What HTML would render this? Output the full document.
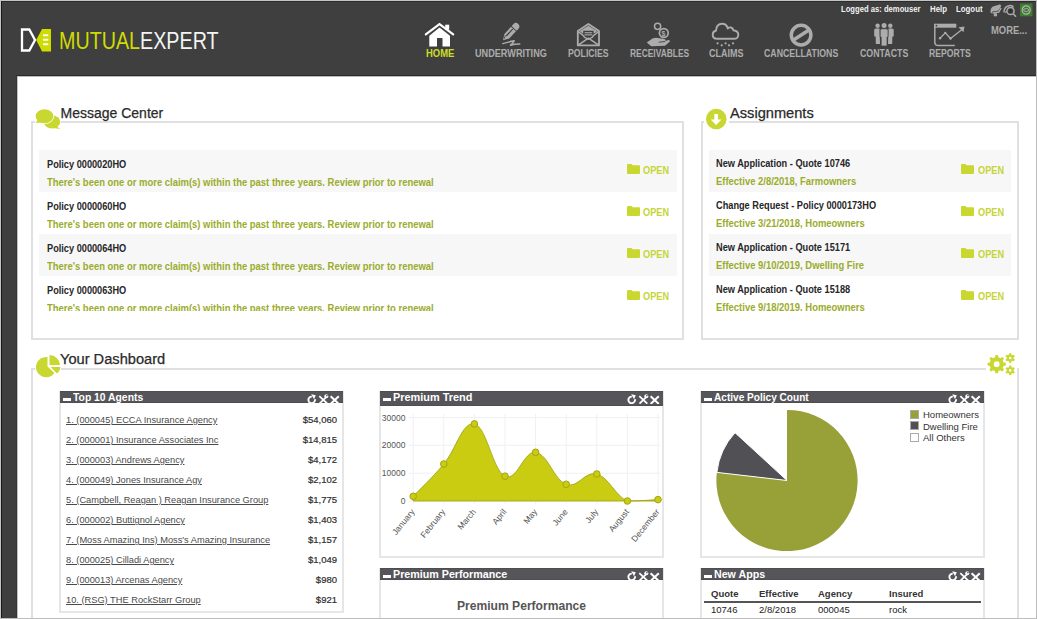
<!DOCTYPE html><html><head><meta charset="utf-8"><style>
*{box-sizing:border-box;margin:0;padding:0}
html,body{width:1037px;height:619px;overflow:hidden;background:#c4c4c4;font-family:"Liberation Sans",sans-serif}
.a{position:absolute;white-space:nowrap;line-height:1}
#dark{position:absolute;left:1px;top:1px;width:1035px;height:617px;background:#3f3f3f;border-left:1px solid #1a1a1a;border-top:1px solid #2c2c2c}
#content{position:absolute;left:17px;top:76px;width:1019px;height:542px;background:#fff}
#navline{position:absolute;left:16px;top:75px;width:1020px;height:1px;background:#2a2a2a}
.nav{font-size:10px;font-weight:bold;color:#acacac;transform-origin:0 0}
.top{font-size:9px;font-weight:bold;color:#f2f2f2;transform-origin:0 0}
.panel{position:absolute;border:2px solid #e0e0e2}
.ptitle{font-size:14px;color:#2a2a2a;transform-origin:0 0;-webkit-text-stroke:0.25px #2a2a2a}
.row{position:absolute;background:#f7f7f7}
.rt{font-size:10px;font-weight:bold;color:#262626;transform-origin:0 0;transform:scaleX(0.92)}
.rg{font-size:10px;font-weight:bold;color:#9bac2c;transform-origin:0 0;transform:scaleX(0.945)}
.open{font-size:10px;font-weight:bold;color:#c6d536;transform-origin:0 0;transform:scaleX(0.92)}
.folder{position:absolute;width:13px;height:10px}
.wh{position:absolute;background:#56555a;box-shadow:inset 0 1px 0 #4e4d52,inset 0 -1px 0 #4e4d52}
.whT{font-size:10px;font-weight:bold;color:#fff;transform-origin:0 0}
.wb{position:absolute;border:2px solid #e6e6e6;border-top:0}
.ag{font-size:9.5px;color:#4a4a4a;text-decoration:underline;transform-origin:0 0;transform:scaleX(0.975)}
.am{font-size:9.5px;color:#2e2e2e;transform-origin:100% 0;-webkit-text-stroke:0.2px #2e2e2e}
.clip{position:absolute;overflow:hidden}
</style></head><body>
<div id="dark"></div><div id="navline"></div><div id="content"></div><div class="a" style="left:16px;top:76px;width:1px;height:542px;background:#363636"></div><div class="a" style="left:17px;top:76px;width:1px;height:542px;background:#c4c4c4"></div><div class="a" style="left:17px;top:76px;width:1019px;height:1px;background:#bcbcbc"></div>
<svg class="a" style="left:20px;top:28px" width="32" height="24" viewBox="0 0 32 24">
 <path d="M2 1.5 H9.3 L15 12 L9.3 22.5 H2 Z" fill="none" stroke="#fff" stroke-width="2.3"/>
 <path d="M16.2 12 L22 1 H31 V23.5 H22 Z" fill="#cfdc00"/>
 <rect x="23" y="6.3" width="5.3" height="1.9" fill="#fff"/>
 <rect x="23" y="10.8" width="5.3" height="1.9" fill="#fff"/>
 <rect x="23" y="15.3" width="5.3" height="1.9" fill="#fff"/>
</svg>
<div class="a" style="left:59px;top:30px;font-size:23.5px;color:#cfdc00;transform:scaleX(0.839);transform-origin:0 0">MUTUAL<span style="color:#f4f4f4">EXPERT</span></div>
<div class="a top" style="left:841px;top:5px;transform:scaleX(0.85)">Logged as: demouser</div>
<div class="a top" style="left:930px;top:5px;transform:scaleX(0.87)">Help</div>
<div class="a top" style="left:956px;top:5px;transform:scaleX(0.87)">Logout</div>
<svg class="a" style="left:989px;top:3px" width="46" height="14" viewBox="0 0 46 14">
 <path d="M1.5 9.5 Q1.2 5 4 3.5 L10.5 1.5 Q12.5 1.5 12 3.5 L9.5 7.5 L3.5 8.5 Q2.8 9 3 10.5 Z" fill="#a9a9a9"/>
 <path d="M3.5 10 L9.8 9 L12.2 5" stroke="#a9a9a9" stroke-width="1.4" fill="none"/>
 <rect x="4.8" y="10.3" width="3.2" height="3" fill="#a9a9a9"/>
 <path d="M15 9.5 Q15 5 18 3.5 L21 2.5 Q23.5 2.2 24.5 4.5" stroke="#a9a9a9" stroke-width="1.5" fill="none"/>
 <circle cx="21.5" cy="8" r="3.6" fill="#3f3f3f" stroke="#a9a9a9" stroke-width="1.5"/>
 <ellipse cx="21.5" cy="8" rx="1.2" ry="2" fill="#2a2a2a"/>
 <path d="M24.2 10.8 L27 13.8" stroke="#a9a9a9" stroke-width="1.6"/>
 <path d="M16 9.5 L17.5 8.5" stroke="#a9a9a9" stroke-width="1.2"/>
 <rect x="31" y="0.5" width="12.5" height="12.8" fill="#3e7c2f"/>
 <ellipse cx="37.2" cy="7" rx="4" ry="4.2" fill="none" stroke="#b3b3b3" stroke-width="1.2"/>
 <ellipse cx="37.2" cy="7" rx="2.6" ry="1.5" fill="none" stroke="#aaa" stroke-width="0.9"/>
</svg>
<svg class="a" style="left:420px;top:18px" width="40" height="32" viewBox="420 18 40 32">
 <path d="M425.8 34.3 L439.5 24.2 L453.2 34.3" fill="none" stroke="#fff" stroke-width="2.2" stroke-linecap="round"/>
 <rect x="445.2" y="24.7" width="4" height="5" fill="#fff"/>
 <path d="M429.3 35.8 L439.5 27.6 L450 35.8 V46.4 H442.5 V38 H437 V46.4 H429.3 Z" fill="#fff"/>
</svg>
<svg class="a" style="left:495px;top:18px" width="32" height="32" viewBox="495 18 32 32">
 <g transform="translate(503,40.3) rotate(-47) scale(0.93)">
  <path d="M0 0 L6 -3.6 H16.5 V3.6 H6 Z" fill="#acacac"/>
  <path d="M17.5 -3.6 H20.5 Q24 -3.6 24 0 Q24 3.6 20.5 3.6 H17.5 Z" fill="#acacac"/>
  <path d="M6.5 -0.6 H15.5" stroke="#3f3f3f" stroke-width="1.3" stroke-linecap="round"/>
  <path d="M1.8 -0.2 L5.8 -1.8" stroke="#3f3f3f" stroke-width="0.8"/>
 </g>
 <path d="M502.8 43.6 Q509 41.8 514.2 40.8 Q512.8 43.3 510.5 45.2 Q514.5 44 519.8 44" fill="none" stroke="#acacac" stroke-width="1.5" stroke-linecap="round" stroke-linejoin="round"/>
</svg>
<svg class="a" style="left:570px;top:18px" width="36" height="32" viewBox="570 18 36 32">
 <path d="M577.8 31 L588.4 24 L599 31 V45.4 H577.8 Z" fill="none" stroke="#acacac" stroke-width="1.8" stroke-linejoin="round"/>
 <path d="M579.5 31.3 L588.4 25.8 L597.3 31.3 L593.6 33.8 V30.8 H583.2 V33.8 Z" fill="#acacac"/>
 <rect x="584.6" y="32.2" width="7.6" height="1.1" fill="#acacac"/><rect x="584.6" y="34.3" width="7.6" height="1.1" fill="#acacac"/>
 <path d="M578.5 44.8 L588.4 38.2 L598.3 44.8" fill="none" stroke="#acacac" stroke-width="1.6"/>
 <path d="M578.5 31.8 L584.5 36.5 M598.3 31.8 L592.3 36.5" fill="none" stroke="#acacac" stroke-width="1.5"/>
 <path d="M583.5 36 L588.4 38.6 L593.3 36 V37.5 L588.4 40 L583.5 37.5 Z" fill="#acacac"/>
</svg>
<svg class="a" style="left:640px;top:18px" width="36" height="32" viewBox="640 18 36 32">
 <circle cx="657.6" cy="26.3" r="3.1" fill="none" stroke="#acacac" stroke-width="1.5"/>
 <circle cx="663.8" cy="33" r="4.4" fill="none" stroke="#acacac" stroke-width="1.7"/>
 <text x="661.6" y="35.8" font-family="Liberation Sans" font-size="7" font-weight="bold" fill="#acacac">$</text>
 <path d="M646.8 42.6 L652.5 38.6 Q655 37.4 657.8 37.9 L664.2 39 Q666.3 39.6 665.6 41.2 L667.5 40.3 Q670.2 39.5 669.9 41.6 L665 45.8 L651.2 46.3 Z" fill="#acacac"/>
 <path d="M658.8 42.2 L665.2 41.5" stroke="#3f3f3f" stroke-width="0.9"/>
</svg>
<svg class="a" style="left:708px;top:18px" width="36" height="32" viewBox="708 18 36 32">
 <path d="M717 38.8 Q712.7 38.8 712.7 34.8 Q712.7 31.2 716 30.7 Q716.5 23.8 722 23.8 Q726.5 23.8 727.8 28.5 Q729 27 731 27.5 Q733 28 733.4 30.3 Q738.5 31 738.3 35 Q738 38.8 734 38.8 Z" fill="none" stroke="#acacac" stroke-width="1.9" stroke-linejoin="round"/>
 <circle cx="717.6" cy="43.3" r="1.15" fill="#acacac"/><circle cx="721.7" cy="45.3" r="1.15" fill="#acacac"/>
 <circle cx="725.6" cy="43.3" r="1.15" fill="#acacac"/><circle cx="729" cy="45.3" r="1.15" fill="#acacac"/>
 <circle cx="733" cy="43.3" r="1.15" fill="#acacac"/>
</svg>
<svg class="a" style="left:783px;top:18px" width="36" height="32" viewBox="783 18 36 32">
 <circle cx="801.1" cy="35.1" r="9.8" fill="none" stroke="#acacac" stroke-width="3.5"/>
 <path d="M793.5 40 L808.5 30.2" stroke="#acacac" stroke-width="3.5"/>
</svg>
<svg class="a" style="left:866px;top:18px" width="36" height="32" viewBox="866 18 36 32">
 <circle cx="877.6" cy="25.8" r="2.2" fill="#acacac"/><circle cx="890.3" cy="25.8" r="2.2" fill="#acacac"/>
 <path d="M874.2 30 Q874 28.5 876 28.5 H879.5 L880 44 H875.8 L875.7 36.5 H874.2 Z" fill="#acacac"/>
 <path d="M893.7 30 Q894 28.5 892 28.5 H888.5 L888 44 H892.2 L892.3 36.5 H893.7 Z" fill="#acacac"/>
 <circle cx="884.1" cy="25.6" r="2.5" fill="#acacac"/>
 <path d="M880.2 30.3 Q880.2 28.8 882 28.8 H886.2 Q888 28.8 888 30.3 V37 H887 V46 H881.2 V37 H880.2 Z" fill="#acacac" stroke="#3f3f3f" stroke-width="0.7"/>
</svg>
<svg class="a" style="left:929px;top:18px" width="40" height="32" viewBox="929 18 40 32">
 <rect x="934" y="23.7" width="22.3" height="4" fill="#acacac"/>
 <circle cx="936.5" cy="25.7" r="0.9" fill="#3f3f3f"/>
 <path d="M934.8 27 V42 Q934.8 45.6 938.4 45.6 H954.8" fill="none" stroke="#acacac" stroke-width="1.5"/>
 <path d="M940 38.3 L945.3 32.9 L950.5 38.5 L962 29.5" fill="none" stroke="#acacac" stroke-width="1.3"/>
 <circle cx="940" cy="38.3" r="1.2" fill="#acacac"/><circle cx="945.3" cy="32.9" r="1.2" fill="#acacac"/><circle cx="950.5" cy="38.5" r="1.2" fill="#acacac"/>
 <path d="M958.5 27.3 L964.5 26.5 L963.5 32.2 Z" fill="#acacac"/>
</svg>
<div class="a nav" style="left:426px;top:49px;transform:scaleX(0.948);color:#cddc2a">HOME</div>
<div class="a nav" style="left:475px;top:49px;transform:scaleX(0.913)">UNDERWRITING</div>
<div class="a nav" style="left:568px;top:49px;transform:scaleX(0.870)">POLICIES</div>
<div class="a nav" style="left:630px;top:49px;transform:scaleX(0.841)">RECEIVABLES</div>
<div class="a nav" style="left:709px;top:49px;transform:scaleX(0.897)">CLAIMS</div>
<div class="a nav" style="left:764px;top:49px;transform:scaleX(0.876)">CANCELLATIONS</div>
<div class="a nav" style="left:860px;top:49px;transform:scaleX(0.881)">CONTACTS</div>
<div class="a nav" style="left:929px;top:49px;transform:scaleX(0.864)">REPORTS</div>
<div class="a nav" style="left:991px;top:26px;transform:scaleX(0.94)">MORE...</div>
<div class="panel" style="left:31px;top:121px;width:653px;height:219px"></div>
<svg class="a" style="left:35px;top:104px;background:#fff" width="26" height="27" viewBox="35 104 26 27">
 <ellipse cx="52" cy="121.8" rx="8.3" ry="6.6" fill="#c8d830"/>
 <path d="M56 126 L60.3 128.9 L53 128 Z" fill="#c8d830"/>
 <ellipse cx="44.5" cy="116.2" rx="9.6" ry="7.8" fill="#fff"/>
 <ellipse cx="44.5" cy="116.2" rx="8.8" ry="7" fill="#c8d830"/>
 <path d="M38 119.5 L35.7 123 L42 122.4 Z" fill="#c8d830"/>
</svg>
<div class="a ptitle" style="left:60.5px;top:106px">Message Center</div>
<div class="clip" style="left:39px;top:150px;width:638px;height:161px">
<div class="row" style="left:0;top:0px;width:638px;height:42px"></div>
<div class="a rt" style="left:8px;top:10px">Policy 0000020HO</div>
<div class="a rg" style="left:8px;top:28px">There's been one or more claim(s) within the past three years. Review prior to renewal</div>
<svg class="folder" style="left:587.5px;top:13.7px" viewBox="0 0 13 10"><path d="M0 1 Q0 0 1 0 H4.5 L5.5 1.3 H12 Q13 1.3 13 2.3 V9 Q13 10 12 10 H1 Q0 10 0 9 Z" fill="#c8d830"/></svg>
<div class="a open" style="left:604px;top:15.5px">OPEN</div>
<div class="a rt" style="left:8px;top:52px">Policy 0000060HO</div>
<div class="a rg" style="left:8px;top:70px">There's been one or more claim(s) within the past three years. Review prior to renewal</div>
<svg class="folder" style="left:587.5px;top:55.7px" viewBox="0 0 13 10"><path d="M0 1 Q0 0 1 0 H4.5 L5.5 1.3 H12 Q13 1.3 13 2.3 V9 Q13 10 12 10 H1 Q0 10 0 9 Z" fill="#c8d830"/></svg>
<div class="a open" style="left:604px;top:57.5px">OPEN</div>
<div class="row" style="left:0;top:84px;width:638px;height:42px"></div>
<div class="a rt" style="left:8px;top:94px">Policy 0000064HO</div>
<div class="a rg" style="left:8px;top:112px">There's been one or more claim(s) within the past three years. Review prior to renewal</div>
<svg class="folder" style="left:587.5px;top:97.7px" viewBox="0 0 13 10"><path d="M0 1 Q0 0 1 0 H4.5 L5.5 1.3 H12 Q13 1.3 13 2.3 V9 Q13 10 12 10 H1 Q0 10 0 9 Z" fill="#c8d830"/></svg>
<div class="a open" style="left:604px;top:99.5px">OPEN</div>
<div class="a rt" style="left:8px;top:136px">Policy 0000063HO</div>
<div class="a rg" style="left:8px;top:154px">There's been one or more claim(s) within the past three years. Review prior to renewal</div>
<svg class="folder" style="left:587.5px;top:139.7px" viewBox="0 0 13 10"><path d="M0 1 Q0 0 1 0 H4.5 L5.5 1.3 H12 Q13 1.3 13 2.3 V9 Q13 10 12 10 H1 Q0 10 0 9 Z" fill="#c8d830"/></svg>
<div class="a open" style="left:604px;top:141.5px">OPEN</div>
</div>
<div class="panel" style="left:701px;top:121px;width:318px;height:219px"></div>
<svg class="a" style="left:704px;top:106px;background:#fff" width="25" height="25" viewBox="0 0 25 25">
 <circle cx="12.3" cy="13" r="10.3" fill="#c8d830"/>
 <path d="M10.3 8 H13.9 V13.5 H17.5 L12.1 18.9 L6.7 13.5 H10.3 Z" fill="#fff"/>
</svg>
<div class="a ptitle" style="left:730px;top:105.5px;transform:scaleX(1.045)">Assignments</div>
<div class="clip" style="left:709px;top:150px;width:302px;height:161px">
<div class="row" style="left:0;top:0px;width:302px;height:42px"></div>
<div class="a rt" style="left:7px;top:9px">New Application - Quote 10746</div>
<div class="a rg" style="left:7px;top:27px">Effective 2/8/2018, Farmowners</div>
<svg class="folder" style="left:252px;top:13.7px" viewBox="0 0 13 10"><path d="M0 1 Q0 0 1 0 H4.5 L5.5 1.3 H12 Q13 1.3 13 2.3 V9 Q13 10 12 10 H1 Q0 10 0 9 Z" fill="#c8d830"/></svg>
<div class="a open" style="left:269px;top:15.5px">OPEN</div>
<div class="a rt" style="left:7px;top:51px">Change Request - Policy 0000173HO</div>
<div class="a rg" style="left:7px;top:69px">Effective 3/21/2018, Homeowners</div>
<svg class="folder" style="left:252px;top:55.7px" viewBox="0 0 13 10"><path d="M0 1 Q0 0 1 0 H4.5 L5.5 1.3 H12 Q13 1.3 13 2.3 V9 Q13 10 12 10 H1 Q0 10 0 9 Z" fill="#c8d830"/></svg>
<div class="a open" style="left:269px;top:57.5px">OPEN</div>
<div class="row" style="left:0;top:84px;width:302px;height:42px"></div>
<div class="a rt" style="left:7px;top:93px">New Application - Quote 15171</div>
<div class="a rg" style="left:7px;top:111px">Effective 9/10/2019, Dwelling Fire</div>
<svg class="folder" style="left:252px;top:97.7px" viewBox="0 0 13 10"><path d="M0 1 Q0 0 1 0 H4.5 L5.5 1.3 H12 Q13 1.3 13 2.3 V9 Q13 10 12 10 H1 Q0 10 0 9 Z" fill="#c8d830"/></svg>
<div class="a open" style="left:269px;top:99.5px">OPEN</div>
<div class="a rt" style="left:7px;top:135px">New Application - Quote 15188</div>
<div class="a rg" style="left:7px;top:153px">Effective 9/18/2019, Homeowners</div>
<svg class="folder" style="left:252px;top:139.7px" viewBox="0 0 13 10"><path d="M0 1 Q0 0 1 0 H4.5 L5.5 1.3 H12 Q13 1.3 13 2.3 V9 Q13 10 12 10 H1 Q0 10 0 9 Z" fill="#c8d830"/></svg>
<div class="a open" style="left:269px;top:141.5px">OPEN</div>
</div>
<div class="panel" style="left:31px;top:368px;width:988px;height:290px"></div>
<svg class="a" style="left:35px;top:352px;background:#fff" width="26" height="27" viewBox="0 0 26 27">
 <path d="M12.5 5 V14.5 L19.5 21 A10.2 10.2 0 1 1 12.5 5 Z" fill="#c8d830"/>
 <path d="M14.5 3 A10.5 10.5 0 0 1 25 13 H14.5 Z" fill="#c8d830"/>
 <path d="M15.5 15 H25.5 A10.5 10.5 0 0 1 22 21.6 Z" fill="#c8d830"/>
</svg>
<div class="a ptitle" style="left:59.5px;top:351.5px;transform:scaleX(1.045)">Your Dashboard</div>
<div class="a" style="left:986px;top:352px;width:31px;height:26px;background:#fff"></div><svg class="a" style="left:984px;top:350px" width="34" height="28" viewBox="984 350 34 28"><path d="M995.36,355.20 L996.25,355.11 L997.15,355.11 L998.04,355.20 L998.40,357.41 L999.06,357.61 L999.69,357.87 L1000.30,358.20 L1002.12,356.89 L1002.81,357.46 L1003.44,358.09 L1004.01,358.78 L1002.70,360.60 L1003.03,361.21 L1003.29,361.84 L1003.49,362.50 L1005.70,362.86 L1005.79,363.75 L1005.79,364.65 L1005.70,365.54 L1003.49,365.90 L1003.29,366.56 L1003.03,367.19 L1002.70,367.80 L1004.01,369.62 L1003.44,370.31 L1002.81,370.94 L1002.12,371.51 L1000.30,370.20 L999.69,370.53 L999.06,370.79 L998.40,370.99 L998.04,373.20 L997.15,373.29 L996.25,373.29 L995.36,373.20 L995.00,370.99 L994.34,370.79 L993.71,370.53 L993.10,370.20 L991.28,371.51 L990.59,370.94 L989.96,370.31 L989.39,369.62 L990.70,367.80 L990.37,367.19 L990.11,366.56 L989.91,365.90 L987.70,365.54 L987.61,364.65 L987.61,363.75 L987.70,362.86 L989.91,362.50 L990.11,361.84 L990.37,361.21 L990.70,360.60 L989.39,358.78 L989.96,358.09 L990.59,357.46 L991.28,356.89 L993.10,358.20 L993.71,357.87 L994.34,357.61 L995.00,357.41 Z M999.6,364.2 A2.9,2.9 0 1 0 993.8000000000001,364.2 A2.9,2.9 0 1 0 999.6,364.2 Z" fill="#c8d830" fill-rule="evenodd"/><path d="M1009.24,353.19 L1009.88,353.11 L1010.52,353.11 L1011.16,353.19 L1011.33,354.69 L1011.75,354.86 L1012.14,355.09 L1012.51,355.37 L1013.88,354.77 L1014.27,355.28 L1014.59,355.83 L1014.84,356.42 L1013.63,357.32 L1013.69,357.77 L1013.69,358.23 L1013.63,358.68 L1014.84,359.58 L1014.59,360.17 L1014.27,360.72 L1013.88,361.23 L1012.51,360.63 L1012.14,360.91 L1011.75,361.14 L1011.33,361.31 L1011.16,362.81 L1010.52,362.89 L1009.88,362.89 L1009.24,362.81 L1009.07,361.31 L1008.65,361.14 L1008.26,360.91 L1007.89,360.63 L1006.52,361.23 L1006.13,360.72 L1005.81,360.17 L1005.56,359.58 L1006.77,358.68 L1006.71,358.23 L1006.71,357.77 L1006.77,357.32 L1005.56,356.42 L1005.81,355.83 L1006.13,355.28 L1006.52,354.77 L1007.89,355.37 L1008.26,355.09 L1008.65,354.86 L1009.07,354.69 Z M1011.5,358 A1.3,1.3 0 1 0 1008.9000000000001,358 A1.3,1.3 0 1 0 1011.5,358 Z" fill="#c8d830" fill-rule="evenodd"/><path d="M1009.24,365.59 L1009.88,365.51 L1010.52,365.51 L1011.16,365.59 L1011.33,367.09 L1011.75,367.26 L1012.14,367.49 L1012.51,367.77 L1013.88,367.17 L1014.27,367.68 L1014.59,368.23 L1014.84,368.82 L1013.63,369.72 L1013.69,370.17 L1013.69,370.63 L1013.63,371.08 L1014.84,371.98 L1014.59,372.57 L1014.27,373.12 L1013.88,373.63 L1012.51,373.03 L1012.14,373.31 L1011.75,373.54 L1011.33,373.71 L1011.16,375.21 L1010.52,375.29 L1009.88,375.29 L1009.24,375.21 L1009.07,373.71 L1008.65,373.54 L1008.26,373.31 L1007.89,373.03 L1006.52,373.63 L1006.13,373.12 L1005.81,372.57 L1005.56,371.98 L1006.77,371.08 L1006.71,370.63 L1006.71,370.17 L1006.77,369.72 L1005.56,368.82 L1005.81,368.23 L1006.13,367.68 L1006.52,367.17 L1007.89,367.77 L1008.26,367.49 L1008.65,367.26 L1009.07,367.09 Z M1011.5,370.4 A1.3,1.3 0 1 0 1008.9000000000001,370.4 A1.3,1.3 0 1 0 1011.5,370.4 Z" fill="#c8d830" fill-rule="evenodd"/></svg>
<div class="wb" style="left:59px;top:391px;width:285px;height:222px"></div>
<div class="wh" style="left:60px;top:391px;width:283px;height:12px"></div>
<div class="a" style="left:62.5px;top:398px;width:8.5px;height:3px;background:#fff"></div>
<div class="a whT" style="left:73px;top:393px;transform:scaleX(1.035)">Top 10 Agents</div>
<svg class="a" style="left:306px;top:393px" width="36" height="11" viewBox="0 0 36 11">
 <path d="M5.8 3.6 A3.3 3.3 0 1 0 8.9 6.2" fill="none" stroke="#fff" stroke-width="1.9"/>
 <path d="M5.2 1.2 L9.8 2.2 L8.0 6.3 Z" fill="#fff"/>
 <path d="M13.3 3.2 L21.3 10.6 M21.5 2.8 L13.5 10.6" stroke="#fff" stroke-width="1.8"/>
 <circle cx="20.3" cy="3.3" r="2" fill="#fff"/><circle cx="20.9" cy="2.6" r="0.8" fill="#505055"/>
 <path d="M24.6 3.2 L32.8 10.9 M32.8 3.2 L24.6 10.9" stroke="#fff" stroke-width="2.1"/>
</svg>
<div class="a ag" style="left:66px;top:415px">1. (000045) ECCA Insurance Agency</div>
<div class="a am" style="right:700px;top:415px">$54,060</div>
<div class="a ag" style="left:66px;top:435px">2. (000001) Insurance Associates Inc</div>
<div class="a am" style="right:700px;top:435px">$14,815</div>
<div class="a ag" style="left:66px;top:455px">3. (000003) Andrews Agency</div>
<div class="a am" style="right:700px;top:455px">$4,172</div>
<div class="a ag" style="left:66px;top:475px">4. (000049) Jones Insurance Agy</div>
<div class="a am" style="right:700px;top:475px">$2,102</div>
<div class="a ag" style="left:66px;top:495px">5. (Campbell, Reagan ) Reagan Insurance Group</div>
<div class="a am" style="right:700px;top:495px">$1,775</div>
<div class="a ag" style="left:66px;top:515px">6. (000002) Buttignol Agency</div>
<div class="a am" style="right:700px;top:515px">$1,403</div>
<div class="a ag" style="left:66px;top:535px">7. (Moss Amazing Ins) Moss's Amazing Insurance</div>
<div class="a am" style="right:700px;top:535px">$1,157</div>
<div class="a ag" style="left:66px;top:555px">8. (000025) Cilladi Agency</div>
<div class="a am" style="right:700px;top:555px">$1,049</div>
<div class="a ag" style="left:66px;top:575px">9. (000013) Arcenas Agency</div>
<div class="a am" style="right:700px;top:575px">$980</div>
<div class="a ag" style="left:66px;top:595px">10. (RSG) THE RockStarr Group</div>
<div class="a am" style="right:700px;top:595px">$921</div>
<div class="wb" style="left:379px;top:391px;width:285px;height:167px"></div>
<div class="wh" style="left:380px;top:391px;width:283px;height:15px"></div>
<div class="a" style="left:382.5px;top:398px;width:8.5px;height:3px;background:#fff"></div>
<div class="a whT" style="left:393px;top:393px;transform:scaleX(1.09)">Premium Trend</div>
<svg class="a" style="left:626px;top:393px" width="36" height="11" viewBox="0 0 36 11">
 <path d="M5.8 3.6 A3.3 3.3 0 1 0 8.9 6.2" fill="none" stroke="#fff" stroke-width="1.9"/>
 <path d="M5.2 1.2 L9.8 2.2 L8.0 6.3 Z" fill="#fff"/>
 <path d="M13.3 3.2 L21.3 10.6 M21.5 2.8 L13.5 10.6" stroke="#fff" stroke-width="1.8"/>
 <circle cx="20.3" cy="3.3" r="2" fill="#fff"/><circle cx="20.9" cy="2.6" r="0.8" fill="#505055"/>
 <path d="M24.6 3.2 L32.8 10.9 M32.8 3.2 L24.6 10.9" stroke="#fff" stroke-width="2.1"/>
</svg>
<svg class="a" style="left:380px;top:406px" width="284" height="152" viewBox="380 406 284 152"><line x1="409" y1="501.0" x2="660" y2="501.0" stroke="#f0f0f0" stroke-width="1"/><text x="405.5" y="504.0" text-anchor="end" font-family="Liberation Sans" font-size="8.5" fill="#555">0</text><line x1="409" y1="473.2" x2="660" y2="473.2" stroke="#f0f0f0" stroke-width="1"/><text x="405.5" y="476.2" text-anchor="end" font-family="Liberation Sans" font-size="8.5" fill="#555">10000</text><line x1="409" y1="445.3" x2="660" y2="445.3" stroke="#f0f0f0" stroke-width="1"/><text x="405.5" y="448.3" text-anchor="end" font-family="Liberation Sans" font-size="8.5" fill="#555">20000</text><line x1="409" y1="417.5" x2="660" y2="417.5" stroke="#f0f0f0" stroke-width="1"/><text x="405.5" y="420.5" text-anchor="end" font-family="Liberation Sans" font-size="8.5" fill="#555">30000</text><line x1="413.2" y1="414" x2="413.2" y2="504" stroke="#f0f0f0" stroke-width="1"/><line x1="443.8" y1="414" x2="443.8" y2="504" stroke="#f0f0f0" stroke-width="1"/><line x1="474.4" y1="414" x2="474.4" y2="504" stroke="#f0f0f0" stroke-width="1"/><line x1="505.0" y1="414" x2="505.0" y2="504" stroke="#f0f0f0" stroke-width="1"/><line x1="535.6" y1="414" x2="535.6" y2="504" stroke="#f0f0f0" stroke-width="1"/><line x1="566.2" y1="414" x2="566.2" y2="504" stroke="#f0f0f0" stroke-width="1"/><line x1="596.8" y1="414" x2="596.8" y2="504" stroke="#f0f0f0" stroke-width="1"/><line x1="627.4" y1="414" x2="627.4" y2="504" stroke="#f0f0f0" stroke-width="1"/><line x1="658.0" y1="414" x2="658.0" y2="504" stroke="#f0f0f0" stroke-width="1"/><path d="M413.2,496.3 C419.3,489.8 431.6,478.5 443.8,464.0 C456.0,449.5 462.2,421.5 474.4,423.9 C486.6,426.4 492.8,470.6 505.0,476.2 C517.2,481.9 523.4,450.7 535.6,452.3 C547.8,453.9 554.0,480.0 566.2,484.3 C578.4,488.6 584.6,470.7 596.8,474.0 C609.0,477.3 615.2,495.9 627.4,501.0 C639.6,501.0 651.9,499.9 658.0,499.6 L658.0,501 L413.2,501 Z" fill="#c9cc10" stroke="#9ea014" stroke-width="0.8"/><circle cx="413.2" cy="496.3" r="3.3" fill="#c9cc10" stroke="#a3a512" stroke-width="1"/><circle cx="443.8" cy="464.0" r="3.3" fill="#c9cc10" stroke="#a3a512" stroke-width="1"/><circle cx="474.4" cy="423.9" r="3.3" fill="#c9cc10" stroke="#a3a512" stroke-width="1"/><circle cx="505.0" cy="476.2" r="3.3" fill="#c9cc10" stroke="#a3a512" stroke-width="1"/><circle cx="535.6" cy="452.3" r="3.3" fill="#c9cc10" stroke="#a3a512" stroke-width="1"/><circle cx="566.2" cy="484.3" r="3.3" fill="#c9cc10" stroke="#a3a512" stroke-width="1"/><circle cx="596.8" cy="474.0" r="3.3" fill="#c9cc10" stroke="#a3a512" stroke-width="1"/><circle cx="627.4" cy="501.0" r="3.3" fill="#c9cc10" stroke="#a3a512" stroke-width="1"/><circle cx="658.0" cy="499.6" r="3.3" fill="#c9cc10" stroke="#a3a512" stroke-width="1"/><text transform="translate(415.2,512) rotate(-51)" text-anchor="end" font-family="Liberation Sans" font-size="8.5" fill="#555">January</text><text transform="translate(445.8,512) rotate(-51)" text-anchor="end" font-family="Liberation Sans" font-size="8.5" fill="#555">February</text><text transform="translate(476.4,512) rotate(-51)" text-anchor="end" font-family="Liberation Sans" font-size="8.5" fill="#555">March</text><text transform="translate(507.0,512) rotate(-51)" text-anchor="end" font-family="Liberation Sans" font-size="8.5" fill="#555">April</text><text transform="translate(537.6,512) rotate(-51)" text-anchor="end" font-family="Liberation Sans" font-size="8.5" fill="#555">May</text><text transform="translate(568.2,512) rotate(-51)" text-anchor="end" font-family="Liberation Sans" font-size="8.5" fill="#555">June</text><text transform="translate(598.8,512) rotate(-51)" text-anchor="end" font-family="Liberation Sans" font-size="8.5" fill="#555">July</text><text transform="translate(629.4,512) rotate(-51)" text-anchor="end" font-family="Liberation Sans" font-size="8.5" fill="#555">August</text><text transform="translate(660.0,512) rotate(-51)" text-anchor="end" font-family="Liberation Sans" font-size="8.5" fill="#555">December</text></svg>
<div class="wb" style="left:379px;top:568px;width:285px;height:60px"></div>
<div class="wh" style="left:380px;top:568px;width:283px;height:12px"></div>
<div class="a" style="left:382.5px;top:575px;width:8.5px;height:3px;background:#fff"></div>
<div class="a whT" style="left:393px;top:570px;transform:scaleX(1.07)">Premium Performance</div>
<svg class="a" style="left:626px;top:570px" width="36" height="11" viewBox="0 0 36 11">
 <path d="M5.8 3.6 A3.3 3.3 0 1 0 8.9 6.2" fill="none" stroke="#fff" stroke-width="1.9"/>
 <path d="M5.2 1.2 L9.8 2.2 L8.0 6.3 Z" fill="#fff"/>
 <path d="M13.3 3.2 L21.3 10.6 M21.5 2.8 L13.5 10.6" stroke="#fff" stroke-width="1.8"/>
 <circle cx="20.3" cy="3.3" r="2" fill="#fff"/><circle cx="20.9" cy="2.6" r="0.8" fill="#505055"/>
 <path d="M24.6 3.2 L32.8 10.9 M32.8 3.2 L24.6 10.9" stroke="#fff" stroke-width="2.1"/>
</svg>
<div class="a" style="left:457px;top:599px;font-size:13px;font-weight:bold;color:#555;transform:scaleX(0.93);transform-origin:0 0">Premium Performance</div>
<div class="wb" style="left:700px;top:391px;width:285px;height:167px"></div>
<div class="wh" style="left:701px;top:391px;width:283px;height:12px"></div>
<div class="a" style="left:703.5px;top:398px;width:8.5px;height:3px;background:#fff"></div>
<div class="a whT" style="left:714px;top:393px;transform:scaleX(1.008)">Active Policy Count</div>
<svg class="a" style="left:947px;top:393px" width="36" height="11" viewBox="0 0 36 11">
 <path d="M5.8 3.6 A3.3 3.3 0 1 0 8.9 6.2" fill="none" stroke="#fff" stroke-width="1.9"/>
 <path d="M5.2 1.2 L9.8 2.2 L8.0 6.3 Z" fill="#fff"/>
 <path d="M13.3 3.2 L21.3 10.6 M21.5 2.8 L13.5 10.6" stroke="#fff" stroke-width="1.8"/>
 <circle cx="20.3" cy="3.3" r="2" fill="#fff"/><circle cx="20.9" cy="2.6" r="0.8" fill="#505055"/>
 <path d="M24.6 3.2 L32.8 10.9 M32.8 3.2 L24.6 10.9" stroke="#fff" stroke-width="2.1"/>
</svg>
<svg class="a" style="left:702px;top:404px" width="200" height="152" viewBox="702 404 200 152">
 <path d="M787,480.5 L787,409.9 A70.6,70.6 0 1 1 716.87,472.39 Z" fill="#98a038"/>
 <path d="M787,480.5 L716.87,472.39 A70.6,70.6 0 0 1 735.03,432.71 Z" fill="#505055" stroke="#fff" stroke-width="1"/>
</svg>
<div class="a" style="left:910px;top:409.5px;width:9px;height:9px;background:#98a038;border:1px solid #aaa"></div>
<div class="a" style="left:923px;top:410.0px;font-size:9.5px;color:#333">Homeowners</div>
<div class="a" style="left:910px;top:421px;width:9px;height:9px;background:#505055;border:1px solid #aaa"></div>
<div class="a" style="left:923px;top:421.5px;font-size:9.5px;color:#333">Dwelling Fire</div>
<div class="a" style="left:910px;top:432.5px;width:9px;height:9px;background:#fff;border:1px solid #aaa"></div>
<div class="a" style="left:923px;top:433.0px;font-size:9.5px;color:#333">All Others</div>
<div class="wb" style="left:700px;top:568px;width:285px;height:60px"></div>
<div class="wh" style="left:701px;top:568px;width:283px;height:12px"></div>
<div class="a" style="left:703.5px;top:575px;width:8.5px;height:3px;background:#fff"></div>
<div class="a whT" style="left:714px;top:570px;transform:scaleX(1.065)">New Apps</div>
<svg class="a" style="left:947px;top:570px" width="36" height="11" viewBox="0 0 36 11">
 <path d="M5.8 3.6 A3.3 3.3 0 1 0 8.9 6.2" fill="none" stroke="#fff" stroke-width="1.9"/>
 <path d="M5.2 1.2 L9.8 2.2 L8.0 6.3 Z" fill="#fff"/>
 <path d="M13.3 3.2 L21.3 10.6 M21.5 2.8 L13.5 10.6" stroke="#fff" stroke-width="1.8"/>
 <circle cx="20.3" cy="3.3" r="2" fill="#fff"/><circle cx="20.9" cy="2.6" r="0.8" fill="#505055"/>
 <path d="M24.6 3.2 L32.8 10.9 M32.8 3.2 L24.6 10.9" stroke="#fff" stroke-width="2.1"/>
</svg>
<div class="a" style="left:711px;top:589px;font-size:9.5px;font-weight:bold;color:#333">Quote</div>
<div class="a" style="left:759px;top:589px;font-size:9.5px;font-weight:bold;color:#333">Effective</div>
<div class="a" style="left:818px;top:589px;font-size:9.5px;font-weight:bold;color:#333">Agency</div>
<div class="a" style="left:889px;top:589px;font-size:9.5px;font-weight:bold;color:#333">Insured</div>
<div class="a" style="left:704px;top:601px;width:277px;height:2px;background:#555"></div>
<div class="a" style="left:711px;top:605px;font-size:9.5px;color:#222">10746</div>
<div class="a" style="left:759px;top:605px;font-size:9.5px;color:#222">2/8/2018</div>
<div class="a" style="left:818px;top:605px;font-size:9.5px;color:#222">000045</div>
<div class="a" style="left:889px;top:605px;font-size:9.5px;color:#222">rock</div>
<div class="a" style="left:0;top:618px;width:1037px;height:1px;background:#bdbdbd"></div>
<div class="a" style="left:1036px;top:0;width:1px;height:619px;background:#bdbdbd"></div>
</body></html>
